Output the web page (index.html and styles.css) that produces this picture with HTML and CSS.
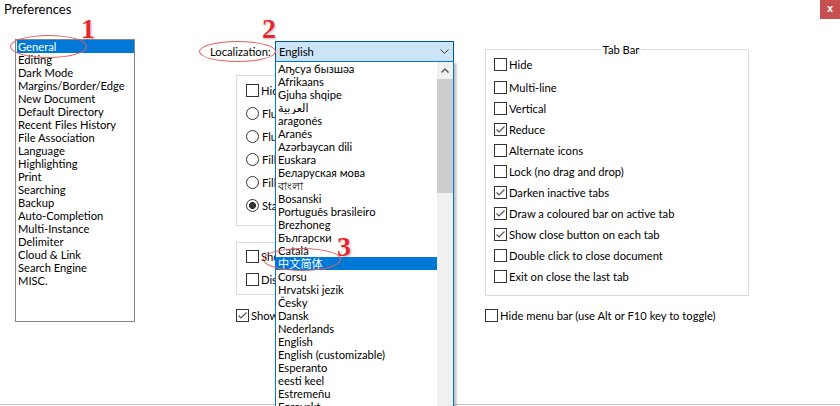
FILE: index.html
```html
<!DOCTYPE html>
<html>
<head>
<meta charset="utf-8">
<title>Preferences</title>
<link rel="stylesheet" href="styles.css">
</head>
<body>
<div class="window">
  <div class="titlebar">
    <span class="title">Preferences</span>
    <div class="close">x</div>
  </div>
  <div class="content">
    <ul class="catlist">
      <li class="sel">General</li>
      <li>Editing</li>
      <li>Dark Mode</li>
      <li>Margins/Border/Edge</li>
      <li>New Document</li>
      <li>Default Directory</li>
      <li>Recent Files History</li>
      <li>File Association</li>
      <li>Language</li>
      <li>Highlighting</li>
      <li>Print</li>
      <li>Searching</li>
      <li>Backup</li>
      <li>Auto-Completion</li>
      <li>Multi-Instance</li>
      <li>Delimiter</li>
      <li>Cloud &amp; Link</li>
      <li>Search Engine</li>
      <li>MISC.</li>
    </ul>
    <div class="panel">
      <div class="col-left">
        <div class="loc-row">
          <span class="loc-label">Localization:</span>
          <div class="combo">
            <span>English</span>
            <svg class="chev" width="9" height="5" viewBox="0 0 9 5"><polyline points="0.5,0.5 4.5,4.5 8.5,0.5" fill="none" stroke="#333" stroke-width="1"/></svg>
            <div class="dropdown">
              <ul class="dd-items">
                <li>Аҧсуа бызшәа</li>
                <li>Afrikaans</li>
                <li>Gjuha shqipe</li>
                <li>العربية</li>
                <li>aragonés</li>
                <li>Aranés</li>
                <li>Azərbaycan dili</li>
                <li>Euskara</li>
                <li>Беларуская мова</li>
                <li>বাংলা</li>
                <li>Bosanski</li>
                <li>Português brasileiro</li>
                <li>Brezhoneg</li>
                <li>Български</li>
                <li>Català</li>
                <li class="sel">中文简体</li>
                <li>Corsu</li>
                <li>Hrvatski jezik</li>
                <li>Česky</li>
                <li>Dansk</li>
                <li>Nederlands</li>
                <li>English</li>
                <li>English (customizable)</li>
                <li>Esperanto</li>
                <li>eesti keel</li>
                <li>Estremeñu</li>
                <li>Føroyskt</li>
              </ul>
              <div class="dd-scroll">
                <div class="dd-up"><svg width="8" height="5" viewBox="0 0 8 5"><polyline points="0.5,4.5 4,1 7.5,4.5" fill="none" stroke="#606060" stroke-width="1.5"/></svg></div>
                <div class="dd-thumb"></div>
              </div>
            </div>
          </div>
        </div>
        <div class="group g1">
          <div class="row"><span class="box"></span>Hide</div>
          <div class="row"><span class="radio"></span>Fluent UI: small</div>
          <div class="row"><span class="radio"></span>Fluent UI: large</div>
          <div class="row"><span class="radio"></span>Filled Fluent UI: small</div>
          <div class="row"><span class="radio"></span>Filled Fluent UI: large</div>
          <div class="row"><span class="radio on"></span>Standard icons: small</div>
        </div>
        <div class="group g2">
          <div class="row"><span class="box"></span>Show</div>
          <div class="row"><span class="box"></span>Disable extension column</div>
        </div>
        <div class="cb show"><span class="box on"><svg width="11" height="11" viewBox="0 0 11 11"><polyline points="1.5,5.5 4,8 9.5,2.5" fill="none" stroke="#555" stroke-width="1.2"/></svg></span>Show status bar</div>
      </div>
      <div class="col-right">
        <fieldset class="tabbar">
          <legend>Tab Bar</legend>
          <div class="cb first"><span class="box"></span>Hide</div>
          <div class="cb second"><span class="box"></span>Multi-line</div>
          <div class="cb"><span class="box"></span>Vertical</div>
          <div class="cb"><span class="box on"><svg width="11" height="11" viewBox="0 0 11 11"><polyline points="1.5,5.5 4,8 9.5,2.5" fill="none" stroke="#555" stroke-width="1.2"/></svg></span>Reduce</div>
          <div class="cb"><span class="box"></span>Alternate icons</div>
          <div class="cb"><span class="box"></span>Lock (no drag and drop)</div>
          <div class="cb"><span class="box on"><svg width="11" height="11" viewBox="0 0 11 11"><polyline points="1.5,5.5 4,8 9.5,2.5" fill="none" stroke="#555" stroke-width="1.2"/></svg></span>Darken inactive tabs</div>
          <div class="cb"><span class="box on"><svg width="11" height="11" viewBox="0 0 11 11"><polyline points="1.5,5.5 4,8 9.5,2.5" fill="none" stroke="#555" stroke-width="1.2"/></svg></span>Draw a coloured bar on active tab</div>
          <div class="cb"><span class="box on"><svg width="11" height="11" viewBox="0 0 11 11"><polyline points="1.5,5.5 4,8 9.5,2.5" fill="none" stroke="#555" stroke-width="1.2"/></svg></span>Show close button on each tab</div>
          <div class="cb"><span class="box"></span>Double click to close document</div>
          <div class="cb"><span class="box"></span>Exit on close the last tab</div>
        </fieldset>
        <div class="cb hidemenu"><span class="box"></span>Hide menu bar (use Alt or F10 key to toggle)</div>
      </div>
    </div>
  </div>
  <div class="bottomline"></div>

  <div class="ann ell ell1"></div>
  <div class="ann ell ell2"></div>
  <div class="ann ell ell3"></div>
  <div class="ann num n1">1</div>
  <div class="ann num n2">2</div>
  <div class="ann num n3">3</div>
</div>
</body>
</html>
```

FILE: styles.css
```css
* {
  box-sizing: border-box;
  margin: 0;
  padding: 0;
}

body {
  margin: 0;
  background: #fff;
  color: #000;
  font-family: Lato, "Noto Sans CJK SC", "DejaVu Sans", sans-serif;
  font-size: 11.2px;
  line-height: 13px;
}

.window {
  position: relative;
  width: 840px;
  height: 406px;
  overflow: hidden;
  background: #fff;
}

.titlebar {
  display: flex;
  justify-content: space-between;
  height: 20px;
}

.title {
  padding: 3px 0 0 4px;
  font-size: 13px;
  line-height: 13px;
}

.close {
  width: 20px;
  height: 19px;
  background: #c75050;
  color: #fff;
  font: bold 11px/17px "Liberation Sans", sans-serif;
  text-align: center;
}

.content {
  display: flex;
  height: 384px;
  padding: 19px 0 0 15px;
}

.catlist {
  list-style: none;
  flex: none;
  width: 120px;
  height: 283px;
  border: 1px solid #828790;
  padding: 0 0 0 1px;
}

.catlist li {
  height: 13px;
  line-height: 13px;
  padding-left: 1px;
  white-space: nowrap;
}

.catlist li.sel,
.dd-items li.sel {
  background: #0078d7;
  color: #fff;
}

.panel {
  display: flex;
  margin-left: 74px;
}

.col-left {
  width: 276px;
  flex: none;
}

.col-right {
  width: 264px;
  flex: none;
}

.loc-row {
  display: flex;
  align-items: center;
  height: 21px;
  margin-top: 2px;
}

.loc-label {
  width: 66px;
  padding-left: 1px;
  white-space: nowrap;
}

.combo {
  position: relative;
  z-index: 2;
  width: 179px;
  height: 21px;
  border: 1px solid #005499;
  background: #cce4f7;
  display: flex;
  align-items: center;
  justify-content: space-between;
  padding: 0 4px 0 3px;
}

.dropdown {
  position: absolute;
  top: 19px;
  left: -1px;
  width: 179px;
  height: 360px;
  border: 1px solid #0078d7;
  background: #fff;
  display: flex;
  box-shadow: 2px 2px 3px rgba(0, 0, 0, 0.3);
}

.dd-items {
  list-style: none;
  flex: 1;
  min-width: 0;
}

.dd-items li {
  height: 13px;
  line-height: 13px;
  padding-left: 2px;
  white-space: nowrap;
  overflow: hidden;
}

.dd-scroll {
  width: 16px;
  flex: none;
  background: #f0f0f0;
}

.dd-up {
  height: 17px;
  display: flex;
  align-items: center;
  justify-content: center;
}

.dd-thumb {
  height: 114px;
  background: #cdcdcd;
}

.group {
  margin-left: 27px;
  width: 214px;
  border: 1px solid #dcdcdc;
}

.g1 {
  margin-top: 13px;
  height: 151px;
  padding: 3px 0 0 9px;
}

.g2 {
  margin-top: 16px;
  height: 53px;
  padding: 2px 0 0 9px;
}

.row {
  display: flex;
  align-items: center;
  height: 23px;
  white-space: nowrap;
}

.cb {
  display: flex;
  align-items: center;
  height: 21px;
  white-space: nowrap;
}

.box {
  flex: none;
  width: 13px;
  height: 13px;
  border: 1px solid #333;
  background: #fff;
  margin-right: 2px;
  display: flex;
  align-items: center;
  justify-content: center;
}

.radio {
  flex: none;
  width: 13px;
  height: 13px;
  border: 1px solid #333;
  border-radius: 50%;
  background: #fff;
  margin-right: 3px;
}

.radio.on {
  background: radial-gradient(circle, #333 0 3.2px, #fff 3.8px);
}

.show {
  margin: 10px 0 0 27px;
}

.tabbar {
  margin-top: 4px;
  width: 264px;
  height: 253px;
  min-width: 0;
  border: 1px solid #dcdcdc;
  padding: 0 0 0 8px;
}

.tabbar legend {
  margin: 0 auto;
  padding: 0 2px;
  line-height: 13px;
}

.tabbar .first {
  margin-top: -2px;
}

.tabbar .second {
  margin-top: 2px;
}

.hidemenu {
  margin-top: 9px;
}

.bottomline {
  height: 1px;
  background: #c4c4c4;
}

.ann {
  position: absolute;
  z-index: 5;
  pointer-events: none;
}

.ell {
  border: 1px solid #e35d5d;
  border-radius: 50%;
}

.ell1 {
  left: 10px;
  top: 35px;
  width: 77px;
  height: 23px;
}

.ell2 {
  left: 199px;
  top: 41px;
  width: 77px;
  height: 21px;
}

.ell3 {
  left: 263px;
  top: 248px;
  width: 78px;
  height: 23px;
}

.num {
  font-family: "Liberation Serif", serif;
  font-size: 28px;
  font-weight: bold;
  line-height: 28px;
  color: #e5262b;
  text-shadow: 0 0 1px #fff, 0 0 2px #fff, 1px 1px 2px rgba(0, 0, 0, 0.35);
}

.n1 {
  left: 81px;
  top: 15px;
}

.n2 {
  left: 262px;
  top: 15px;
}

.n3 {
  left: 337px;
  top: 233px;
}
```
